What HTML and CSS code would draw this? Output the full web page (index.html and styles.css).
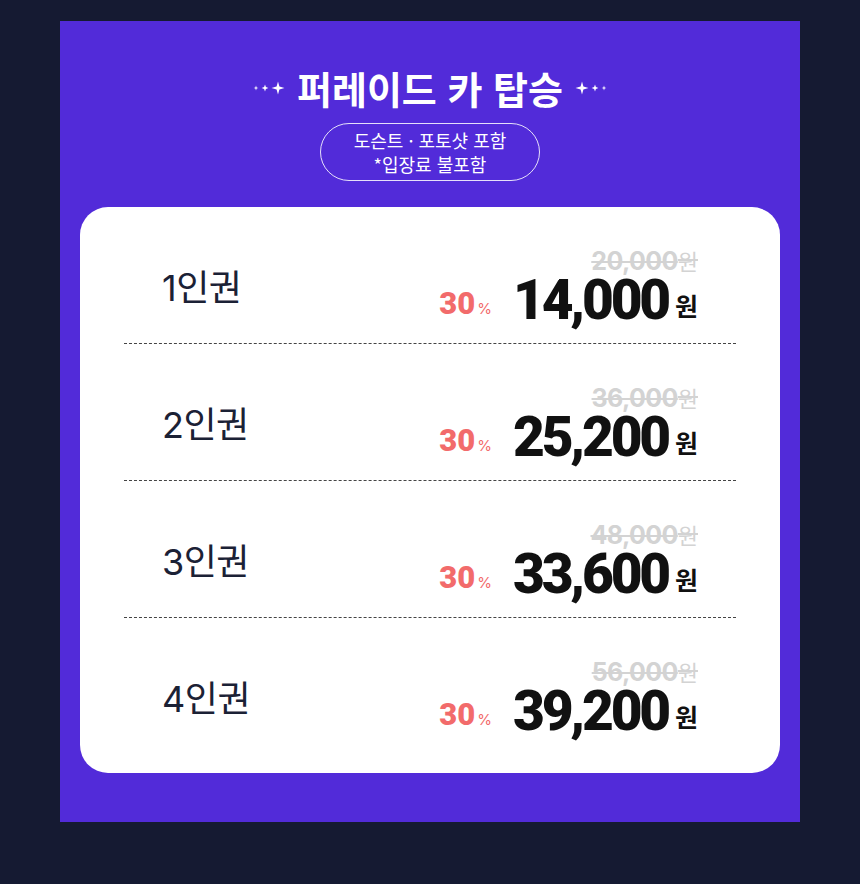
FILE: index.html
```html
<!DOCTYPE html>
<html lang="ko">
<head>
<meta charset="utf-8">
<link rel="stylesheet" href="styles.css">
</head>
<body>
<main class="panel">
  <h1 class="title">
    <svg class="sparkle" width="32" height="16" viewBox="0 0 32 16"><path d="M3 5.6 L3.6 7.4 L5.4 8 L3.6 8.6 L3 10.4 L2.4 8.6 L0.6 8 L2.4 7.4Z M12 4.6 L12.9 7.1 L15.4 8 L12.9 8.9 L12 11.4 L11.1 8.9 L8.6 8 L11.1 7.1Z M25 1.5 L26.4 6.6 L31.5 8 L26.4 9.4 L25 14.5 L23.6 9.4 L18.5 8 L23.6 6.6Z" fill="#fff"/></svg>
    <span>퍼레이드 카 탑승</span>
    <svg class="sparkle" width="32" height="16" viewBox="0 0 32 16"><g transform="translate(32 0) scale(-1 1)"><path d="M3 5.6 L3.6 7.4 L5.4 8 L3.6 8.6 L3 10.4 L2.4 8.6 L0.6 8 L2.4 7.4Z M12 4.6 L12.9 7.1 L15.4 8 L12.9 8.9 L12 11.4 L11.1 8.9 L8.6 8 L11.1 7.1Z M25 1.5 L26.4 6.6 L31.5 8 L26.4 9.4 L25 14.5 L23.6 9.4 L18.5 8 L23.6 6.6Z" fill="#fff"/></g></svg>
  </h1>
  <div class="pill">도슨트 · 포토샷 포함<br>*입장료 불포함</div>
  <section class="card">
    <div class="row">
      <div class="label">1인권</div>
      <div class="price">
        <div class="orig">20,000<span class="won">원</span></div>
        <div class="now"><span class="off">30<small>%</small></span><span class="amt">14,000</span><span class="won-b">원</span></div>
      </div>
    </div>
    <div class="row">
      <div class="label">2인권</div>
      <div class="price">
        <div class="orig">36,000<span class="won">원</span></div>
        <div class="now"><span class="off">30<small>%</small></span><span class="amt">25,200</span><span class="won-b">원</span></div>
      </div>
    </div>
    <div class="row">
      <div class="label">3인권</div>
      <div class="price">
        <div class="orig">48,000<span class="won">원</span></div>
        <div class="now"><span class="off">30<small>%</small></span><span class="amt">33,600</span><span class="won-b">원</span></div>
      </div>
    </div>
    <div class="row">
      <div class="label">4인권</div>
      <div class="price">
        <div class="orig">56,000<span class="won">원</span></div>
        <div class="now"><span class="off">30<small>%</small></span><span class="amt">39,200</span><span class="won-b">원</span></div>
      </div>
    </div>
  </section>
</main>
</body>
</html>
```

FILE: styles.css
```css
* { box-sizing: border-box; }
html, body { margin: 0; padding: 0; }
body {
  background: #151a32;
  width: 860px;
  height: 884px;
  padding-top: 21px;
  font-family: Inter, "Noto Sans CJK KR", sans-serif;
}
.panel {
  width: 740px;
  height: 801px;
  margin: 0 auto;
  background: #522bd9;
  padding: 44px 20px 50px;
  display: flex;
  flex-direction: column;
  align-items: center;
}
.title {
  margin: 0;
  height: 46px;
  line-height: 46px;
  display: flex;
  align-items: center;
  gap: 12px;
  color: #fff;
  font-family: "Noto Sans CJK KR", sans-serif;
  font-weight: 700;
  font-size: 38px;
  letter-spacing: 0;
}
.sparkle { display: block; }
.pill {
  margin-top: 12px;
  border: 1px solid rgba(255,255,255,0.85);
  border-radius: 29px;
  padding: 4px 33px;
  color: #fff;
  text-align: center;
  font-family: "Noto Sans CJK KR", sans-serif;
  font-size: 18px;
  line-height: 24px;
  letter-spacing: 0;
}
.card {
  margin-top: 26px;
  width: 700px;
  background: #fff;
  border-radius: 28px;
  padding: 0 44px 19px;
}
.row {
  display: flex;
  align-items: center;
  justify-content: space-between;
  padding: 38px 38px 18px;
  border-bottom: 1px dashed #444;
}
.row:last-child { border-bottom: none; }
.label {
  font-family: Inter, "Noto Sans CJK KR", sans-serif;
  font-size: 36px;
  font-weight: 400;
  color: #1b2135;
  letter-spacing: -0.5px;
}
.price {
  display: flex;
  flex-direction: column;
  align-items: flex-end;
}
.orig {
  height: 30px;
  line-height: 30px;
  font-size: 25px;
  font-weight: 700;
  color: #d3d3d3;
  letter-spacing: -0.6px;
  text-decoration: line-through;
  text-decoration-thickness: 2px;
}
.won {
  font-family: "Noto Sans CJK KR", sans-serif;
  font-weight: 400;
  font-size: 22px;
  letter-spacing: 0;
}
.now {
  height: 50px;
  display: flex;
  align-items: center;
}
.off {
  color: #f26b6b;
  font-family: Roboto, sans-serif;
  font-weight: 900;
  font-size: 31px;
  margin-right: 21px;
  margin-top: 6px;
}
.off small {
  font-family: Inter, sans-serif;
  font-size: 15px;
  font-weight: 400;
  margin-left: 2px;
}
.amt {
  color: #111;
  font-family: Roboto, sans-serif;
  font-weight: 900;
  font-size: 55px;
  letter-spacing: -3.2px;
  line-height: 50px;
}
.won-b {
  color: #111;
  font-family: "Noto Sans CJK KR", sans-serif;
  font-weight: 700;
  font-size: 25px;
  margin-left: 7px;
  margin-top: 10px;
}
```
